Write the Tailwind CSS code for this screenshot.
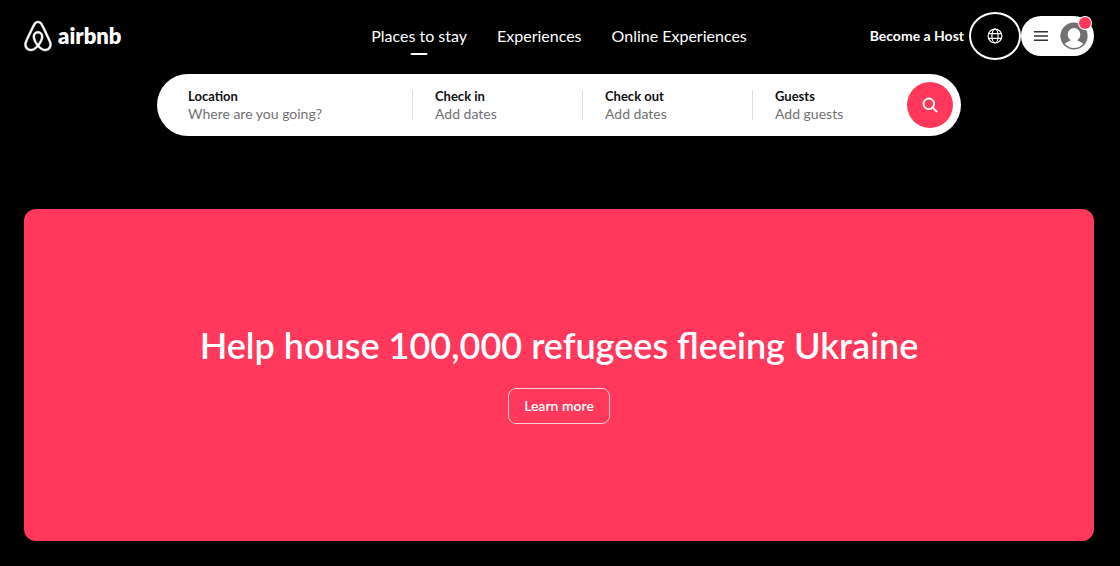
<!DOCTYPE html>
<html lang="en">
<head>
<meta charset="utf-8">
<meta name="viewport" content="width=device-width, initial-scale=1">
<title>Airbnb</title>
<script src="https://cdn.jsdelivr.net/npm/@tailwindcss/browser@4"></script>
</head>
<body class="flex min-h-screen flex-col bg-black pr-[26px] pb-[25px] pl-6 font-['Lato',sans-serif] text-white">
  <header>
    <div class="grid h-[72px] grid-cols-[1fr_auto_1fr] items-center">
      <a href="#" aria-label="airbnb home" class="flex items-center gap-1 justify-self-start">
        <svg class="-ml-0.5 size-8" viewBox="0 0 32 32" fill="currentColor" stroke="currentColor" stroke-width=".4" aria-hidden="true"><path d="M16 1c2.008 0 3.463.963 4.751 3.269l.533 1.025c1.954 3.83 6.114 12.54 7.1 14.836l.145.353c.667 1.591.91 2.472.96 3.396l.01.415.001.228c0 4.062-2.877 6.478-6.357 6.478-2.224 0-4.556-1.258-6.709-3.386l-.257-.26-.172-.179h-.011l-.176.185c-2.044 2.1-4.267 3.42-6.414 3.615l-.28.019-.267.006C5.377 31 2.5 28.584 2.5 24.522l.005-.469c.026-.928.23-1.768.83-3.244l.216-.524c.966-2.298 6.083-12.989 7.707-16.034C12.537 1.963 13.992 1 16 1zm0 2c-1.239 0-2.053.539-2.987 2.21l-.523 1.008c-1.926 3.776-6.06 12.43-7.031 14.692l-.345.836c-.427 1.071-.573 1.655-.605 2.24l-.009.33v.206C4.5 27.395 6.411 29 8.857 29c1.773 0 3.87-1.236 5.831-3.354-2.295-2.938-3.855-6.45-3.855-8.91 0-2.913 1.933-5.386 5.178-5.42 3.223.034 5.156 2.507 5.156 5.42 0 2.456-1.555 5.96-3.855 8.91C19.28 27.771 21.376 29 23.143 29c2.447 0 4.357-1.605 4.357-4.478l-.004-.411c-.019-.672-.17-1.296-.714-2.62l-.248-.6c-1.065-2.478-5.993-12.768-7.538-15.664C18.053 3.539 17.24 3 16 3zm.01 10.316c-2.01.021-3.177 1.514-3.177 3.42 0 1.797 1.18 4.58 2.955 7.044l.21.287.174-.234c1.73-2.385 2.898-5.066 2.989-6.875l.006-.221c0-1.906-1.167-3.4-3.156-3.421h-.001z"/></svg>
        <span class="text-[22px] leading-7 font-extrabold">airbnb</span>
      </a>
      <nav class="flex items-center gap-[30px] text-base" aria-label="Main">
        <a href="#" aria-current="page" class="relative">Places to stay<span class="absolute -bottom-[7px] left-1/2 h-0.5 w-[17px] -translate-x-1/2 rounded-full bg-white"></span></a>
        <a href="#">Experiences</a>
        <a href="#">Online Experiences</a>
      </nav>
      <div class="flex items-center justify-self-end">
        <a href="#" class="mr-[5px] text-sm font-bold">Become a Host</a>
        <button type="button" aria-label="Choose a language" class="flex h-[48px] w-[52px] items-center justify-center rounded-[50%] border-2 border-white">
          <svg class="size-4" viewBox="0 0 16 16" fill="none" stroke="currentColor" stroke-width="1.2" aria-hidden="true"><circle cx="8" cy="8" r="6.9"/><ellipse cx="8" cy="8" rx="3.1" ry="6.9"/><path d="M1.7 5.6h12.6M1.7 10.4h12.6"/></svg>
        </button>
        <button type="button" aria-label="Main menu" class="relative flex h-10 w-[73px] items-center justify-between rounded-full bg-white pr-[6px] pl-[13px] text-[#333]">
          <svg class="size-[14px]" viewBox="0 0 14 14" stroke="currentColor" stroke-width="1.6" aria-hidden="true"><path d="M0 2.800h14M0 7h14M0 11.200h14"/></svg>
          <svg class="size-7" viewBox="0 0 28 28" aria-hidden="true"><circle cx="14" cy="14" r="13.6" fill="#717171"/><path fill="#fff" d="M14 6a6.300 6.300 0 0 1 6.300 6.400c0 2.300-1.100 4.300-2.700 5.400v.9c2.200.5 4.200 1.500 5.600 3.100a12 12 0 0 1-18.400 0c1.400-1.600 3.400-2.600 5.600-3.100v-.9c-1.600-1.100-2.700-3.100-2.700-5.400A6.300 6.300 0 0 1 14 6z"/></svg>
          <span class="absolute top-px right-[3px] size-3 rounded-full bg-[#ff385c] ring-1 ring-white"></span>
        </button>
      </div>
    </div>
    <form class="mx-auto mt-0.5 grid h-[62px] w-full max-w-[804px] grid-cols-[255fr_170fr_170fr_201fr] items-center rounded-full bg-white pr-2 text-[#111]">
      <label class="flex h-[30px] flex-col justify-center pl-[31px]">
        <span class="text-[13px] leading-[18px] font-bold">Location</span>
        <input type="text" placeholder="Where are you going?" class="w-full text-sm leading-[18px] outline-none placeholder:text-[#717171]">
      </label>
      <label class="flex h-[30px] flex-col justify-center border-l border-[#ddd] pl-[22px]">
        <span class="text-[13px] leading-[18px] font-bold">Check in</span>
        <input type="text" placeholder="Add dates" class="w-full text-sm leading-[18px] outline-none placeholder:text-[#717171]">
      </label>
      <label class="flex h-[30px] flex-col justify-center border-l border-[#ddd] pl-[22px]">
        <span class="text-[13px] leading-[18px] font-bold">Check out</span>
        <input type="text" placeholder="Add dates" class="w-full text-sm leading-[18px] outline-none placeholder:text-[#717171]">
      </label>
      <div class="flex items-center">
        <label class="flex h-[30px] min-w-0 flex-1 flex-col justify-center border-l border-[#ddd] pl-[22px]">
          <span class="text-[13px] leading-[18px] font-bold">Guests</span>
          <input type="text" placeholder="Add guests" class="w-full text-sm leading-[18px] outline-none placeholder:text-[#717171]">
        </label>
        <button type="submit" aria-label="Search" class="flex size-[46px] shrink-0 items-center justify-center rounded-full bg-[#ff385c] text-white">
          <svg class="size-4" viewBox="0 0 16 16" fill="none" stroke="currentColor" stroke-width="1.9" stroke-linecap="round" aria-hidden="true"><circle cx="6.8" cy="6.8" r="5.3"/><path d="M10.7 10.7l4 4"/></svg>
        </button>
      </div>
    </form>
  </header>
  <main class="mt-[73px] flex flex-1 flex-col items-center justify-center rounded-xl bg-[#ff385c] px-6 pb-[3px]">
    <h1 class="text-center text-4xl leading-[44px] font-semibold">Help house 100,000 refugees fleeing Ukraine</h1>
    <a href="#" class="mt-[21px] flex h-9 items-center rounded-lg border border-white/75 px-[15px] text-sm font-semibold">Learn more</a>
  </main>
</body>
</html>
